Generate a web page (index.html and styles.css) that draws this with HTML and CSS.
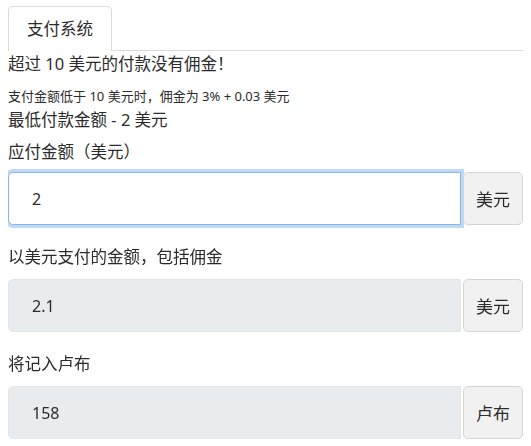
FILE: index.html
```html
<!DOCTYPE html>
<html lang="zh">
<head>
    <meta charset="UTF-8">
    <meta name="viewport" content="width=device-width, initial-scale=1.0">
    <title>支付系统</title>
    <link rel="stylesheet" href="styles.css">
</head>
<body>

    <div class="tabs">
        <div class="tab active">支付系统</div>
    </div>

    <div class="content">
        <p class="note-big">超过 10 美元的付款没有佣金！</p>
        <p class="note-small">支付金额低于 10 美元时，佣金为 3% + 0.03 美元</p>
        <p class="note-min">最低付款金额 - 2 美元</p>

        <div class="field">
            <label class="field-label" for="amount">应付金额（美元）</label>
            <div class="input-group">
                <input id="amount" class="form-input focused" type="text" value="2" autofocus>
                <span class="addon">美元</span>
            </div>
        </div>

        <div class="field">
            <label class="field-label" for="total">以美元支付的金额，包括佣金</label>
            <div class="input-group">
                <input id="total" class="form-input" type="text" value="2.1" disabled>
                <span class="addon">美元</span>
            </div>
        </div>

        <div class="field">
            <label class="field-label" for="rub">将记入卢布</label>
            <div class="input-group">
                <input id="rub" class="form-input" type="text" value="158" disabled>
                <span class="addon">卢布</span>
            </div>
        </div>
    </div>

</body>
</html>
```
FILE: styles.css
```css
body {
    font-family: "Noto Sans", "Noto Sans CJK SC", sans-serif;
    color: #2b2b2b;
    background: #fff;
    margin: 6px 8px 0 8px;
}

.tabs {
    display: flex;
    border-bottom: 1px solid #dcdcdc;
}

.tab {
    height: 44px;
    line-height: 44px;
    padding: 0 18px;
    font-size: 16.5px;
    border: 1px solid #dcdcdc;
    border-bottom: none;
    border-radius: 5px 5px 0 0;
    margin-bottom: -1px;
    background: #fff;
}

.content p {
    margin: 0;
}

.note-big {
    font-size: 16.5px;
    line-height: 24px;
    margin-top: 1px !important;
}

.note-small {
    font-size: 13px;
    line-height: 20px;
    margin-top: 10px !important;
}

.note-min {
    font-size: 16.5px;
    line-height: 24px;
    margin-top: 2px !important;
}

.field {
    margin-top: 8px;
}

.field + .field {
    margin-top: 20px;
}

.field-label {
    display: block;
    font-size: 16.5px;
    line-height: 24px;
    margin-bottom: 8px;
}

.field + .field .field-label {
    margin-bottom: 10px;
}

.input-group {
    display: flex;
    gap: 2px;
}

.form-input {
    flex: 1;
    min-width: 0;
    height: 53px;
    box-sizing: border-box;
    padding: 0 23px;
    font-family: inherit;
    font-size: 16px;
    color: #2b2b2b;
    background: #fff;
    border: 1px solid #d6d9dc;
    border-radius: 5px 0 0 5px;
    outline: none;
}

.form-input:disabled {
    background: #e9ecef;
    border-color: #e2e5e8;
    color: #2b2b2b;
}

.focused,
.form-input:focus {
    border-color: #86b7e8;
    box-shadow: 0 0 0 3px rgba(120, 170, 230, 0.45);
}

.addon {
    display: flex;
    align-items: center;
    justify-content: center;
    width: 60px;
    height: 53px;
    box-sizing: border-box;
    font-size: 17px;
    background: #f1f1f1;
    border: 1px solid #d4d4d4;
    border-radius: 5px;
}
```
